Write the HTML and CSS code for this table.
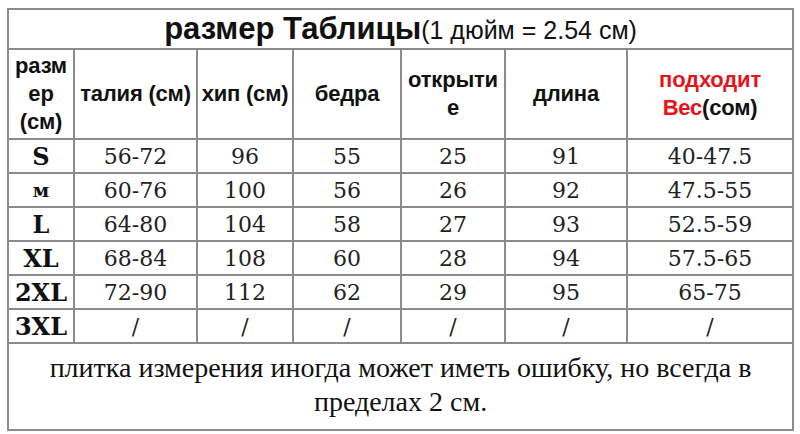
FILE: index.html
```html
<!DOCTYPE html>
<html lang="ru">
<head>
<meta charset="utf-8">
<link rel="stylesheet" href="styles.css">
</head>
<body>
<table class="chart">
  <colgroup>
    <col class="c1"><col class="c2"><col class="c3"><col class="c4"><col class="c5"><col class="c6"><col class="c7">
  </colgroup>
  <tr class="title-row">
    <td colspan="7" class="title"><b>размер Таблицы</b><span class="unit">(1 дюйм = 2.54 см)</span></td>
  </tr>
  <tr class="head-row">
    <th>разм<br>ер<br>(см)</th>
    <th>талия (см)</th>
    <th>хип (см)</th>
    <th>бедра</th>
    <th>открыти<br>е</th>
    <th>длина</th>
    <th><span class="red">подходит<br>Вес</span>(сом)</th>
  </tr>
  <tr class="row"><td class="sz">S</td><td>56-72</td><td>96</td><td>55</td><td>25</td><td>91</td><td>40-47.5</td></tr>
  <tr class="row"><td class="sz small">м</td><td>60-76</td><td>100</td><td>56</td><td>26</td><td>92</td><td>47.5-55</td></tr>
  <tr class="row"><td class="sz">L</td><td>64-80</td><td>104</td><td>58</td><td>27</td><td>93</td><td>52.5-59</td></tr>
  <tr class="row"><td class="sz">XL</td><td>68-84</td><td>108</td><td>60</td><td>28</td><td>94</td><td>57.5-65</td></tr>
  <tr class="row"><td class="sz">2XL</td><td>72-90</td><td>112</td><td>62</td><td>29</td><td>95</td><td>65-75</td></tr>
  <tr class="row"><td class="sz">3XL</td><td>/</td><td>/</td><td>/</td><td>/</td><td>/</td><td>/</td></tr>
  <tr class="foot-row">
    <td colspan="7" class="foot"><div class="foot-text">плитка измерения иногда может иметь ошибку, но всегда в<br>пределах 2 см.</div></td>
  </tr>
</table>
</body>
</html>
```
FILE: styles.css
```css
html, body {
  margin: 0;
  padding: 0;
  background: #ffffff;
}
body {
  padding: 8px 0 0 7px;
}
.chart {
  border-collapse: collapse;
  width: 785px;
  table-layout: fixed;
  border: 2px solid #444444;
  color: #111111;
}
.c1 { width: 66px; }
.c2 { width: 123px; }
.c3 { width: 96px; }
.c4 { width: 108px; }
.c5 { width: 104px; }
.c6 { width: 122px; }
.c7 { width: 166px; }
.chart td, .chart th {
  border: 2px solid #8c8c8c;
  padding: 0;
  text-align: center;
  vertical-align: middle;
}
.title-row { height: 40px; }
.title {
  font-family: "Liberation Sans", Arial, sans-serif;
  font-size: 31px;
  line-height: 36px;
  padding-top: 1px;
  white-space: nowrap;
}
.title b { font-weight: bold; }
.unit {
  font-size: 25px;
  font-weight: normal;
}
.head-row { height: 90px; }
.head-row th {
  font-family: "Liberation Sans", Arial, sans-serif;
  font-weight: bold;
  font-size: 22px;
  line-height: 28px;
  white-space: nowrap;
  letter-spacing: -0.2px;
}
.red { color: #e8141b; }
.row { height: 34px; }
.row td {
  font-family: "DejaVu Serif", Georgia, serif;
  font-size: 22px;
  color: #222222;
}
.row td.sz {
  font-weight: bold;
  font-size: 24px;
  color: #111111;
}
.row td.sz.small {
  font-size: 19px;
}
.foot-row { height: 87px; }
.foot {
  font-family: "Liberation Serif", "Times New Roman", serif;
  font-size: 28px;
  line-height: 34px;
  vertical-align: top;
  color: #111111;
  white-space: nowrap;
}
.foot-text {
  margin-top: -4px;
}
```
